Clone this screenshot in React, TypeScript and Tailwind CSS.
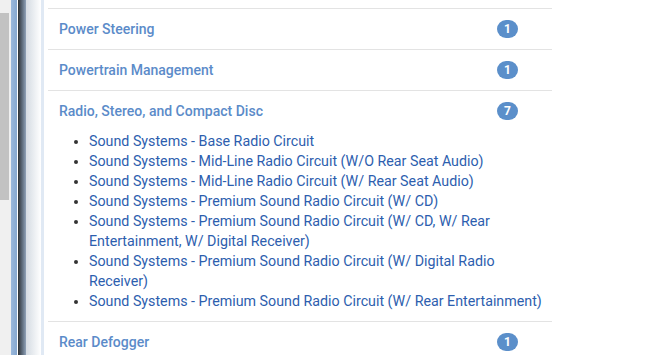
import React from "react";

const sections: any[] = [
  { name: "Power Steering", count: 1 },
  { name: "Powertrain Management", count: 1 },
  {
    name: "Radio, Stereo, and Compact Disc",
    count: 7,
    items: [
      "Sound Systems - Base Radio Circuit",
      "Sound Systems - Mid-Line Radio Circuit (W/O Rear Seat Audio)",
      "Sound Systems - Mid-Line Radio Circuit (W/ Rear Seat Audio)",
      "Sound Systems - Premium Sound Radio Circuit (W/ CD)",
      "Sound Systems - Premium Sound Radio Circuit (W/ CD, W/ Rear Entertainment, W/ Digital Receiver)",
      "Sound Systems - Premium Sound Radio Circuit (W/ Digital Radio Receiver)",
      "Sound Systems - Premium Sound Radio Circuit (W/ Rear Entertainment)",
    ],
  },
  { name: "Rear Defogger", count: 1 },
];

const App: React.FC = () => {
  return (
    <div
      className="flex h-[355px] w-[667px] overflow-hidden bg-white"
      style={{ fontFamily: "Roboto, 'Liberation Sans', sans-serif" }}
    >
      {/* left window chrome */}
      <div className="flex h-full w-[48px] shrink-0">
        <div className="flex h-full w-[11px] flex-col bg-[#f0f0f0]">
          <div className="mt-[13px] h-[187px] w-[9px] bg-[#c2c2c2]" />
        </div>
        <div className="h-full w-[6px] bg-gradient-to-r from-[#9ab8dc] to-[#86a8cf]" />
        <div className="h-full w-[1px] bg-white" />
        <div className="h-full w-[8px] bg-gradient-to-r from-[#2e3236] via-[#5a6878] to-[#90a2b8]" />
        <div className="h-full w-[15px] bg-gradient-to-r from-[#d4dbe2] to-white" />
        <div className="h-full w-[3px] bg-[#e0e9f4]" />
        <div className="h-full w-[4px] bg-white" />
      </div>

      <div className="w-[504px] shrink-0 pt-[8px]">
        {sections.map((s: any) => (
          <div key={s.name} className="border-t border-[#e3e3e3]">
            <div className="flex items-center justify-between py-[10px] pl-[11px] pr-[34px]">
              <div className="text-[14px] font-medium leading-[20px] text-[#5b8bc9]">
                {s.name}
              </div>
              <div className="flex h-[18px] min-w-[21px] items-center justify-center rounded-full bg-[#5b8fca] px-[6px] text-[12px] font-bold leading-none text-white">
                {s.count}
              </div>
            </div>
            {s.items ? (
              <ul className="mb-[10px] list-disc pl-[41px] pr-[8px] text-[14.25px] leading-[20px] text-[#2d5eae]">
                {s.items.map((it: string) => (
                  <li key={it} className="marker:text-[#333]">
                    {it}
                  </li>
                ))}
              </ul>
            ) : null}
          </div>
        ))}
      </div>
    </div>
  );
};

export default App;
